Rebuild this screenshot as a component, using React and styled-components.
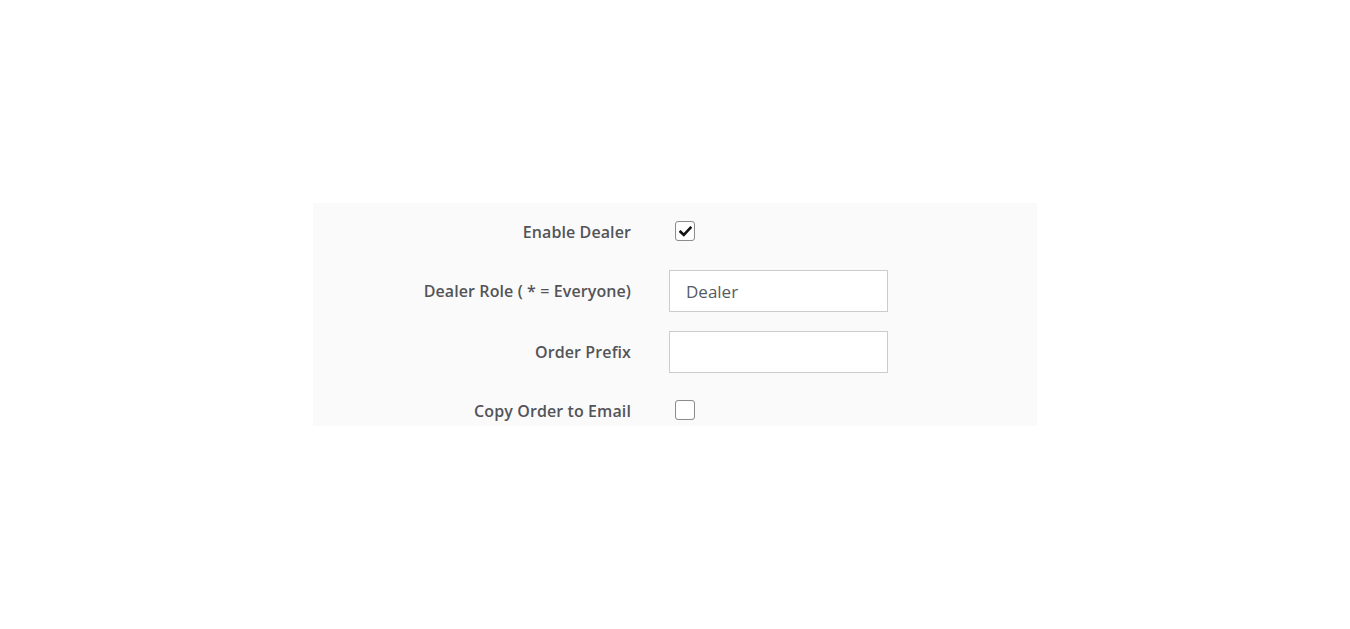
import React from "react";
import styled, { createGlobalStyle } from "styled-components";

const Global = createGlobalStyle`
  html, body { margin: 0; padding: 0; background: #ffffff; }
  body { font-family: "Open Sans", "Liberation Sans", sans-serif; }
`;

const Page = styled.div`
  min-height: 100vh;
  display: flex;
  align-items: center;
  justify-content: center;
`;

const Panel = styled.form`
  width: 724px;
  height: 223px;
  box-sizing: border-box;
  background: #fafafa;
  padding-top: 7px;
  display: grid;
  grid-template-columns: 318px 220px;
  column-gap: 38px;
  grid-auto-rows: 42px;
  row-gap: 18px;
  align-content: start;
  overflow: hidden;
`;

const Label = styled.label`
  justify-self: end;
  align-self: center;
  font-family: "Open Sans", "Liberation Sans", sans-serif;
  font-weight: 600;
  font-size: 16px;
  letter-spacing: 0.1px;
  color: #535458;
  margin-top: ${(p) => p.$shift || 0}px;
`;

const Field = styled.div`
  display: flex;
  align-items: center;
  margin-top: ${(p) => p.$shift || 0}px;
`;

const Box = styled.span`
  width: 18px;
  height: 18px;
  margin-left: 6px;
  border: 1px solid #8c8c8c;
  border-radius: 3px;
  background: #ffffff;
  display: inline-flex;
  align-items: center;
  justify-content: center;
  box-shadow: inset 0 0 1px rgba(0, 0, 0, 0.15);
`;

const Input = styled.input`
  width: 219px;
  height: 42px;
  box-sizing: border-box;
  border: 1px solid #cccccc;
  border-radius: 0;
  background: #ffffff;
  padding: 0 16px;
  font-family: "Open Sans", "Liberation Sans", sans-serif;
  font-size: 17px;
  color: #555b63;
  outline: none;
`;

function Check({ checked }) {
  return (
    <Box>
      {checked && (
        <svg width="13" height="11" viewBox="0 0 13 11">
          <path d="M1.5 5.8 L4.8 9 L11.5 1.8" fill="none" stroke="#111" strokeWidth="2.6" strokeLinecap="square" />
        </svg>
      )}
    </Box>
  );
}

export default function App() {
  return (
    <Page>
      <Global />
      <Panel>
        <Label $shift={1}>Enable Dealer</Label>
        <Field><Check checked /></Field>
        <Label>Dealer Role ( * = Everyone)</Label>
        <Field><Input defaultValue="Dealer" /></Field>
        <Label $shift={1}>Order Prefix</Label>
        <Field $shift={1}><Input /></Field>
        <Label $shift={0}>Copy Order to Email</Label>
        <Field $shift={-3}><Check /></Field>
      </Panel>
    </Page>
  );
}
